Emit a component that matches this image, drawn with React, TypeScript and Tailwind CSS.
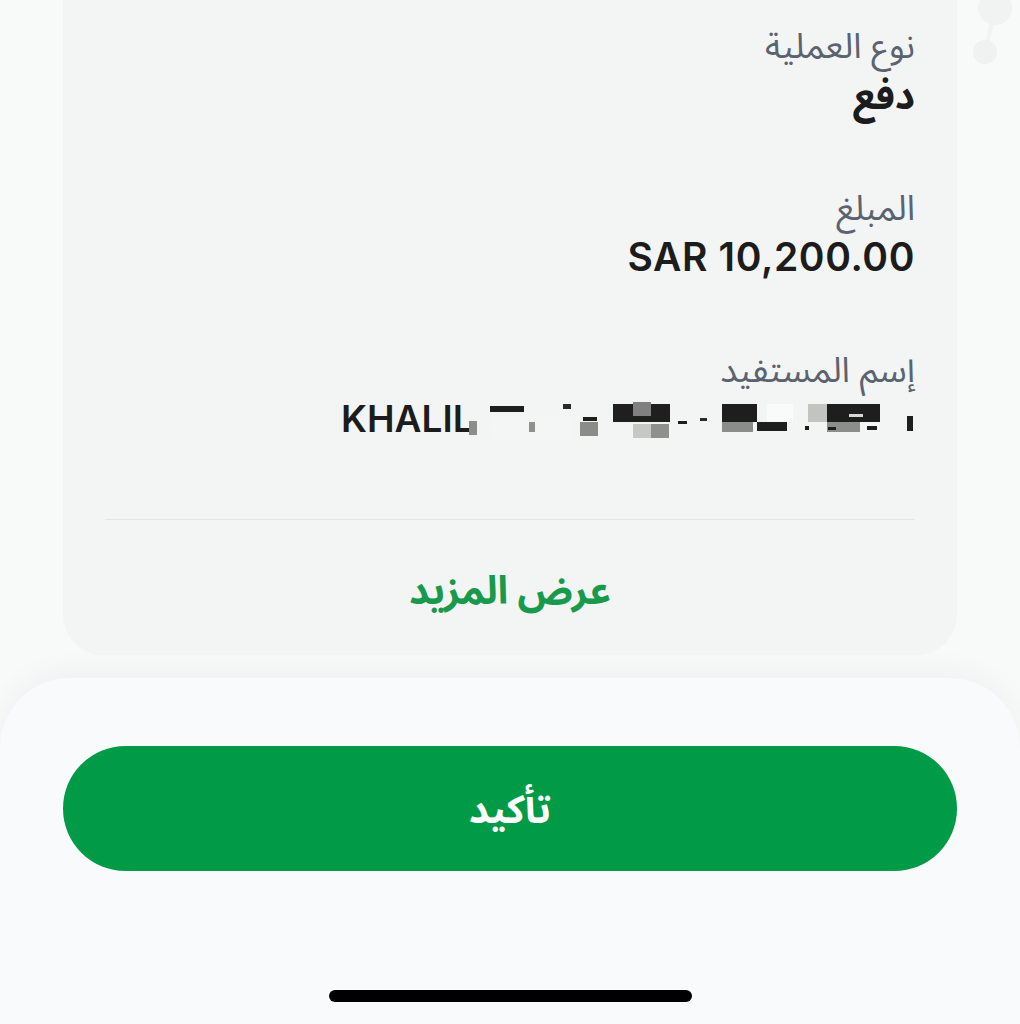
import React from "react";

const font = { fontFamily: "Inter, 'Noto Sans Arabic', 'DejaVu Sans', sans-serif" };

type Blk = [number, number, number, number, string];
// x, y, w, h relative to name box (left 341, top 398)
const blocks: Blk[] = [
  [128, 24, 8, 14, "#8a8d8a"],
  [149, 9, 34, 6, "#1e1e1e"],
  [150, 20, 80, 22, "#f4f6f6"],
  [188, 25, 6, 10, "#8f918f"],
  [222, 7, 8, 5, "#2a2a2a"],
  [242, 20, 14, 4, "#1e1e1e"],
  [239, 25, 18, 14, "#8a8c8a"],
  [272, 7, 57, 18, "#1f1f1f"],
  [292, 5, 18, 14, "#7f807f"],
  [292, 27, 18, 14, "#c5c8c5"],
  [310, 27, 18, 14, "#8d908d"],
  [337, 24, 9, 3, "#1e1e1e"],
  [359, 21, 7, 3, "#2a2a2a"],
  [381, 7, 35, 18, "#1e1e1e"],
  [381, 25, 31, 10, "#8b8d8b"],
  [416, 25, 30, 9, "#1f1f1f"],
  [426, 7, 26, 18, "#f9fafa"],
  [467, 7, 19, 18, "#c2c4c2"],
  [486, 7, 53, 18, "#1e1e1e"],
  [508, 17, 14, 3, "#d8d8d8"],
  [486, 25, 33, 10, "#8c8e8c"],
  [464, 29, 4, 4, "#1e1e1e"],
  [487, 30, 8, 3, "#1e1e1e"],
  [526, 29, 10, 4, "#1e1e1e"],
  [566, 19, 6, 15, "#1e1e1e"],
];

export default function App() {
  return (
    <div
      className="relative w-[1020px] h-[1024px] overflow-hidden bg-[#f8f9f9] flex flex-col"
      style={font}
    >
      <svg
        className="absolute left-[955px] top-0"
        width="65"
        height="80"
        viewBox="0 0 65 80"
      >
        <line x1="40" y1="10" x2="30" y2="52" stroke="#f0f3f2" strokeWidth="4" />
        <circle cx="40" cy="8" r="17" fill="#f0f3f2" />
        <circle cx="30" cy="52" r="12" fill="#eff2f1" />
      </svg>

      <div className="mx-[63px] w-[894px] bg-[#f3f5f5] rounded-b-[40px] px-[42px] pt-[25px] pb-[40px] flex flex-col" dir="rtl">
        <div className="flex flex-col items-start">
          <div className="text-[35px] leading-[40px] text-[#5b6370]">نوع العملية</div>
          <div className="mt-[8px] text-[39px] leading-[44px] font-bold text-[#1c1c1c]">دفع</div>
        </div>
        <div className="flex flex-col items-start mt-[70px]">
          <div className="text-[35px] leading-[40px] text-[#5b6370]">المبلغ</div>
          <div className="mt-[8px] text-[39px] leading-[44px] font-semibold tracking-[0.6px] text-[#1c1c1c]" dir="ltr">
            SAR 10,200.00
          </div>
        </div>
        <div className="flex flex-col items-start mt-[70px]">
          <div className="text-[35px] leading-[40px] text-[#5b6370]">إسم المستفيد</div>
          <div className="mt-[8px] w-[574px] h-[44px] relative" dir="ltr">
            <span className="text-[37px] leading-[44px] font-semibold text-[#1c1c1c]">KHALIL</span>
            {blocks.map(([x, y, w, h, c], i) => (
              <div
                key={i}
                className="absolute"
                style={{ left: x, top: y, width: w, height: h, background: c }}
              />
            ))}
          </div>
        </div>
        <div className="mt-[78px] h-px bg-[#e1e6e6]" />
        <div className="mt-[45px] text-center text-[39px] leading-[50px] font-bold text-[#179a4c]">
          عرض المزيد
        </div>
      </div>

      <div className="mt-[23px] flex-1 bg-[#f9fafc] rounded-t-[70px] shadow-[0_-6px_30px_rgba(0,0,0,0.04)] flex flex-col items-center pt-[68px]">
        <button className="w-[894px] h-[125px] rounded-full bg-[#019a46] text-white text-[39px] font-bold leading-none flex items-center justify-center">
          تأكيد
        </button>
        <div className="mt-[119px] w-[363px] h-[12px] rounded-full bg-black" />
      </div>
    </div>
  );
}
